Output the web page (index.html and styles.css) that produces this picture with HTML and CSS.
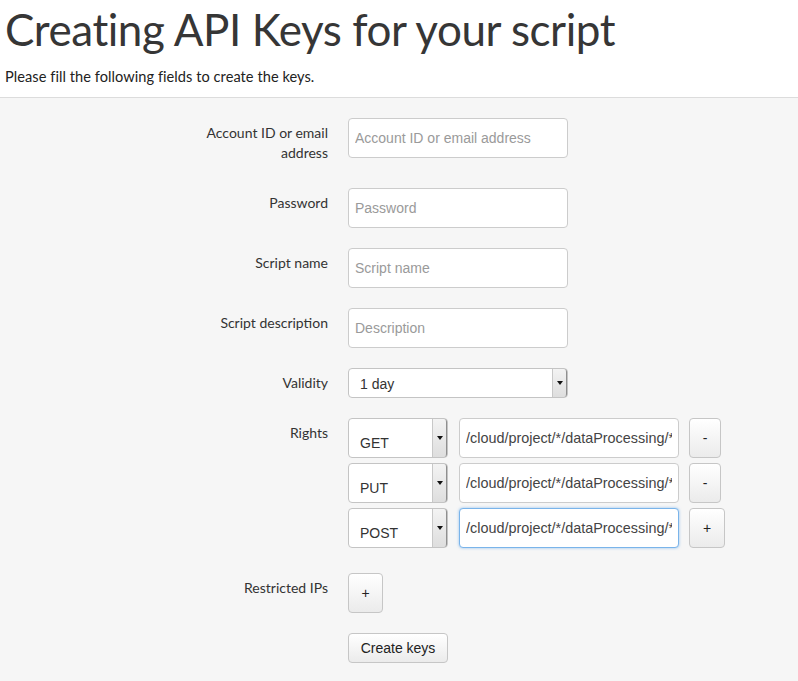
FILE: index.html
```html
<!DOCTYPE html>
<html>
<head>
<meta charset="utf-8">
<link rel="stylesheet" href="styles.css">
</head>
<body>
<header class="page-header">
  <h1 class="title">Creating API Keys for your script</h1>
  <p class="lead">Please fill the following fields to create the keys.</p>
</header>
<main class="content">
  <form class="form">
    <div class="group group-tall">
      <label class="label">Account ID or email address</label>
      <div class="control"><input class="input" type="text" placeholder="Account ID or email address"></div>
    </div>
    <div class="group">
      <label class="label">Password</label>
      <div class="control"><input class="input" type="password" placeholder="Password"></div>
    </div>
    <div class="group">
      <label class="label">Script name</label>
      <div class="control"><input class="input" type="text" placeholder="Script name"></div>
    </div>
    <div class="group">
      <label class="label">Script description</label>
      <div class="control"><input class="input" type="text" placeholder="Description"></div>
    </div>
    <div class="group">
      <label class="label">Validity</label>
      <div class="control">
        <div class="select-wrap select-wide"><select class="select select-short"><option>1 day</option></select></div>
      </div>
    </div>
    <div class="group group-rights">
      <label class="label">Rights</label>
      <div class="control rights">
        <div class="right-row">
          <div class="select-wrap select-method"><select class="select select-tall"><option>GET</option></select></div>
          <input class="input input-path" type="text" value="/cloud/project/*/dataProcessing/*">
          <button class="btn btn-sq" type="button">-</button>
        </div>
        <div class="right-row">
          <div class="select-wrap select-method"><select class="select select-tall"><option>PUT</option></select></div>
          <input class="input input-path" type="text" value="/cloud/project/*/dataProcessing/*">
          <button class="btn btn-sq" type="button">-</button>
        </div>
        <div class="right-row">
          <div class="select-wrap select-method"><select class="select select-tall"><option>POST</option></select></div>
          <input class="input input-path input-focus" type="text" value="/cloud/project/*/dataProcessing/*">
          <button class="btn btn-sq btn-plus" type="button">+</button>
        </div>
      </div>
    </div>
    <div class="group">
      <label class="label">Restricted IPs</label>
      <div class="control"><button class="btn btn-ip" type="button">+</button></div>
    </div>
    <div class="group">
      <div class="label"></div>
      <div class="control"><button class="btn btn-submit" type="button">Create keys</button></div>
    </div>
  </form>
</main>
</body>
</html>
```

FILE: styles.css
```css
html, body {
  margin: 0;
  padding: 0;
}
body {
  background: #f6f6f6;
  color: #333;
  font-family: "Lato", "DejaVu Sans", sans-serif;
  min-height: 681px;
}
.page-header {
  background: #fff;
  border-bottom: 1px solid #dcdcdc;
  padding: 0 5px;
  height: 98px;
  box-sizing: border-box;
  overflow: hidden;
}
.title {
  margin: 0;
  padding-top: 3px;
  font-weight: 400;
  font-size: 44px;
  line-height: 52px;
  color: #363636;
  letter-spacing: -0.45px;
}
.lead {
  margin: 13px 0 0;
  font-size: 14.6px;
  line-height: 18px;
  letter-spacing: 0.05px;
  color: #222;
}
.content {
  padding: 20px 0 0 196px;
}
.form {
  display: flex;
  flex-direction: column;
}
.group {
  display: grid;
  grid-template-columns: 132px 1fr;
  column-gap: 20px;
  margin-bottom: 20px;
  align-items: start;
}
.group-tall {
  margin-bottom: 25px;
}
.label {
  text-align: right;
  font-size: 14px;
  line-height: 20px;
  padding-top: 5px;
  color: #333;
}
.control {
  display: flex;
}
.input {
  box-sizing: border-box;
  width: 220px;
  height: 40px;
  border: 1px solid #cccccc;
  border-radius: 4px;
  background: #fff;
  padding: 0 6px;
  font-family: "Liberation Sans", Arial, sans-serif;
  font-size: 14px;
  color: #555;
  outline: none;
}
.input::placeholder {
  color: #9a9a9a;
}
.input-path {
  font-size: 14.4px;
  color: #444;
  margin-left: 11px;
}
.input-focus {
  border-color: #7ab4ea;
  box-shadow: 0 0 3px rgba(102, 170, 235, 0.7);
}
.select-wrap {
  position: relative;
  display: inline-block;
}
.select-wrap::after {
  content: "";
  position: absolute;
  top: 1px;
  right: 1px;
  bottom: 1px;
  width: 13px;
  border-left: 1px solid #c8c8c8;
  border-right: 1px solid #8f8f8f;
  border-radius: 0 3px 3px 0;
  background: linear-gradient(#f3f3f3, #dedede);
  pointer-events: none;
}
.select-wrap::before {
  content: "";
  position: absolute;
  right: 5px;
  top: 50%;
  margin-top: -2px;
  border-left: 3px solid transparent;
  border-right: 3px solid transparent;
  border-top: 4px solid #111;
  z-index: 1;
  pointer-events: none;
}
.select {
  -webkit-appearance: none;
  appearance: none;
  box-sizing: border-box;
  background: #fff;
  border: 1px solid #c4c4c4;
  border-radius: 4px;
  font-family: "Liberation Sans", Arial, sans-serif;
  font-size: 14px;
  color: #333;
  padding: 0 0 0 11px;
  outline: none;
  margin: 0;
}
.select-short {
  width: 220px;
  height: 30px;
  padding-top: 2px;
}
.select-tall {
  width: 100px;
  height: 40px;
  padding-top: 9px;
}
.rights {
  flex-direction: column;
}
.right-row {
  display: flex;
  align-items: flex-start;
  margin-bottom: 5px;
}
.right-row:last-child {
  margin-bottom: 0;
}
.group-rights {
  margin-bottom: 25px;
}
.btn {
  box-sizing: border-box;
  border: 1px solid #c6c6c6;
  border-radius: 4px;
  background: linear-gradient(#ffffff, #ebebeb);
  font-family: "Liberation Sans", Arial, sans-serif;
  font-size: 14px;
  color: #222;
  padding: 0;
  margin: 0;
  cursor: pointer;
}
.btn-sq {
  width: 32px;
  height: 40px;
  margin-left: 10px;
}
.btn-plus {
  width: 36px;
}
.btn-ip {
  width: 35px;
  height: 40px;
}
.btn-submit {
  width: 100px;
  height: 30px;
}
```
